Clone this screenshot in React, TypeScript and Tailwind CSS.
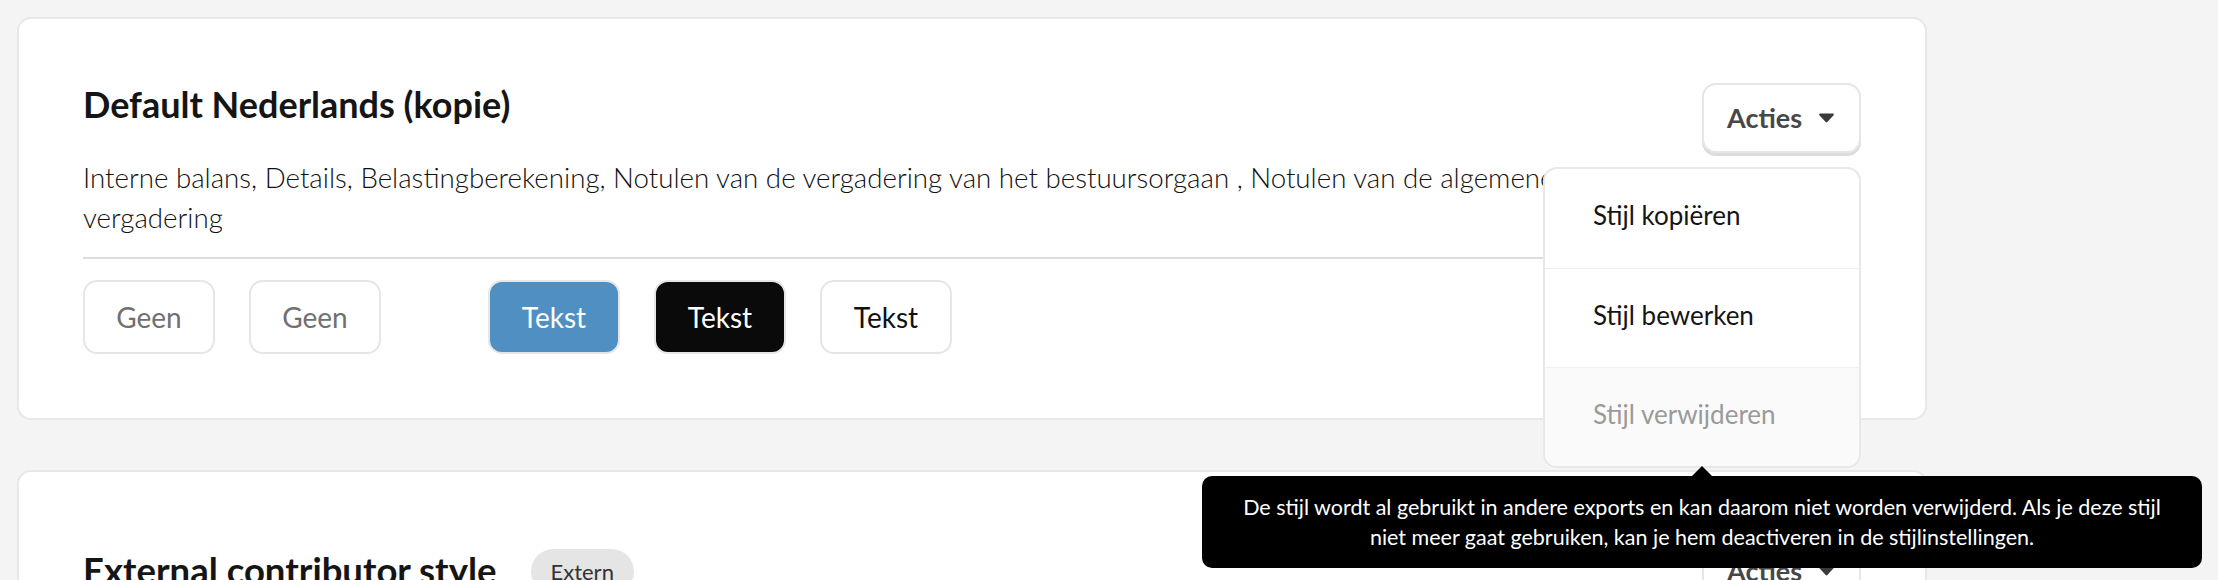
import React from "react";

function Caret() {
  return (
    <svg width="15" height="10" viewBox="0 0 15 10" className="shrink-0">
      <path d="M1.2 0.5h12.6c0.9 0 1.4 1 0.8 1.7L8.3 9.1c-0.4 0.5-1.2 0.5-1.6 0L0.4 2.2C-0.2 1.5 0.3 0.5 1.2 0.5z" fill="#3a3a3a" />
    </svg>
  );
}

function ActiesButton() {
  return (
    <button className="flex h-[70px] w-[159px] items-center justify-between rounded-[14px] border-2 border-[#e6e6e6] bg-white pl-[23px] pr-[25px] text-[27px] font-bold text-[#474747] shadow-[0_3px_0_#dcdcdc]">
      <span>Acties</span>
      <Caret />
    </button>
  );
}

const MENU = [
  { label: "Stijl kopiëren", disabled: false },
  { label: "Stijl bewerken", disabled: false },
  { label: "Stijl verwijderen", disabled: true },
];

function ActiesMenu() {
  return (
    <div className="absolute right-0 top-full z-20 mt-[14px] w-[318px] rounded-[14px] border-2 border-[#e8e8e8] bg-white">
      {MENU.map((item, i) => (
        <div
          key={item.label}
          className={`relative flex h-[99px] items-center pb-[6px] pl-[48px] text-[26px] ${
            i > 0 ? "border-t border-[#f0f0f0]" : ""
          } ${
            item.disabled
              ? "rounded-b-[12px] bg-[#fafafa] text-[#9a9a9a]"
              : "text-[#151515]"
          }`}
        >
          {item.label}
          {item.disabled && (
            <div className="absolute left-1/2 top-full mt-[10px] w-[1000px] -translate-x-1/2">
              <div className="absolute -top-[10px] left-1/2 h-0 w-0 -translate-x-1/2 border-x-[10px] border-b-[10px] border-x-transparent border-b-black" />
              <div className="rounded-[10px] bg-black px-[30px] py-[16px] text-center text-[21.5px] leading-[30px] text-white">
                De stijl wordt al gebruikt in andere exports en kan daarom niet
                worden verwijderd. Als je deze stijl niet meer gaat gebruiken,
                kan je hem deactiveren in de stijlinstellingen.
              </div>
            </div>
          )}
        </div>
      ))}
    </div>
  );
}

function StyleButton({
  label,
  variant,
}: {
  label: string;
  variant: "none" | "blue" | "black" | "white";
}) {
  const look = {
    none: "bg-white text-[#707070]",
    blue: "bg-[#508fc2] text-white",
    black: "bg-[#0a0a0a] text-white",
    white: "bg-white text-[#111111]",
  }[variant];
  return (
    <div
      className={`flex h-[74px] w-[132px] items-center justify-center rounded-[14px] border-2 border-[#e6e6e6] text-[28px] ${look}`}
    >
      {label}
    </div>
  );
}

export default function App() {
  return (
    <div className="min-h-screen bg-[#f4f4f4] p-[17px] font-[Lato,sans-serif]">
      <div className="flex w-[1910px] flex-col gap-[50px]">
        {/* first style card, menu open */}
        <div className="relative z-10 rounded-[14px] border-2 border-[#e8e8e8] bg-white p-[64px]">
          <div className="flex items-start gap-[60px]">
            <div className="min-w-0 flex-1">
              <h2 className="text-[36px] font-bold leading-[1.2] text-[#151515]">
                Default Nederlands (kopie)
              </h2>
              <p className="mt-[32px] text-[27.7px] font-light leading-[40px] text-[#111111]">
                Interne balans, Details, Belastingberekening, Notulen van de
                vergadering van het bestuursorgaan , Notulen van de algemene
                vergadering
              </p>
              <div className="mt-[19px] h-[2px] bg-[#dddddd]" />
              <div className="mt-[21px] flex items-center">
                <div className="flex gap-[34px]">
                  <StyleButton label="Geen" variant="none" />
                  <StyleButton label="Geen" variant="none" />
                </div>
                <div className="ml-[107px] flex gap-[34px]">
                  <StyleButton label="Tekst" variant="blue" />
                  <StyleButton label="Tekst" variant="black" />
                  <StyleButton label="Tekst" variant="white" />
                </div>
              </div>
            </div>
            <div className="relative">
              <ActiesButton />
              <ActiesMenu />
            </div>
          </div>
        </div>

        {/* second style card */}
        <div className="rounded-[14px] border-2 border-[#e8e8e8] bg-white p-[64px]">
          <div className="flex items-center gap-[60px]">
            <div className="flex min-w-0 flex-1 items-center gap-[34px]">
              <h2 className="text-[36.5px] font-bold leading-[1.2] text-[#151515]">
                External contributor style
              </h2>
              <span className="rounded-full bg-[#e5e5e5] px-[20px] py-[6px] text-[22px] text-[#333333]">
                Extern
              </span>
            </div>
            <ActiesButton />
          </div>
          <p className="mt-[32px] text-[27.7px] font-light leading-[40px] text-[#111111]">
            Interne balans, Details
          </p>
          <div className="mt-[19px] h-[2px] bg-[#dddddd]" />
          <div className="h-[120px]" />
        </div>
      </div>
    </div>
  );
}
